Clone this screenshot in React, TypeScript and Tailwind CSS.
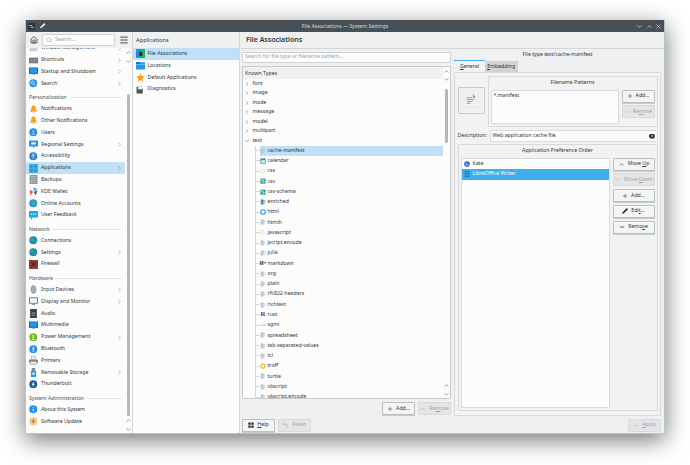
import { ChevronDown, ChevronRight, ChevronUp, Check, Minus, Plus, Search, X, Undo2, Menu, Home, Pencil } from "lucide-react";
import type { ReactNode } from "react";

type SideItem = { name: string; icon: string; more?: boolean; active?: boolean };

const sections: { title?: string; items: SideItem[] }[] = [
  {
    items: [
      { name: "Window Management", icon: "doc", more: true },
      { name: "Shortcuts", icon: "keyboard", more: true },
      { name: "Startup and Shutdown", icon: "monitor", more: true },
      { name: "Search", icon: "search", more: true },
    ],
  },
  {
    title: "Personalization",
    items: [
      { name: "Notifications", icon: "bell" },
      { name: "Other Notifications", icon: "bell" },
      { name: "Users", icon: "user" },
      { name: "Regional Settings", icon: "chat", more: true },
      { name: "Accessibility", icon: "access" },
      { name: "Applications", icon: "apps", more: true, active: true },
      { name: "Backups", icon: "backup" },
      { name: "KDE Wallet", icon: "wallet" },
      { name: "Online Accounts", icon: "online" },
      { name: "User Feedback", icon: "feedback" },
    ],
  },
  {
    title: "Network",
    items: [
      { name: "Connections", icon: "globe" },
      { name: "Settings", icon: "globe", more: true },
      { name: "Firewall", icon: "firewall" },
    ],
  },
  {
    title: "Hardware",
    items: [
      { name: "Input Devices", icon: "mouse", more: true },
      { name: "Display and Monitor", icon: "screen", more: true },
      { name: "Audio", icon: "audio" },
      { name: "Multimedia", icon: "monitor" },
      { name: "Power Management", icon: "power", more: true },
      { name: "Bluetooth", icon: "bluetooth" },
      { name: "Printers", icon: "printer" },
      { name: "Removable Storage", icon: "usb", more: true },
      { name: "Thunderbolt", icon: "thunder" },
    ],
  },
  {
    title: "System Administration",
    items: [
      { name: "About this System", icon: "info" },
      { name: "Software Update", icon: "update" },
    ],
  },
];

const treeTop = ["font", "image", "inode", "message", "model", "multipart"];

const treeLeaves: [string, string][] = [
  ["cache-manifest", "file"],
  ["calendar", "calendar"],
  ["css", "braces"],
  ["csv", "sheet"],
  ["csv-schema", "sheet"],
  ["enriched", "rich"],
  ["html", "html"],
  ["htmlh", "file"],
  ["javascript", "braces"],
  ["jscript.encode", "file"],
  ["julia", "file"],
  ["markdown", "markdown"],
  ["org", "file"],
  ["plain", "file"],
  ["rfc822-headers", "file"],
  ["richtext", "file"],
  ["rust", "rust"],
  ["sgml", "sgml"],
  ["spreadsheet", "file"],
  ["tab-separated-values", "file"],
  ["tcl", "file"],
  ["troff", "troff"],
  ["turtle", "file"],
  ["vbscript", "file"],
  ["vbscript.encode", "file"],
];

const SideIcon = function ({ kind }: { kind: string }) {
  const round = (fill: string, inner: ReactNode) => (
    <svg viewBox="0 0 16 16" className="size-[8.5px]">
      <circle cx="8" cy="8" r="7.5" fill={fill} />
      {inner}
    </svg>
  );
  const box = (inner: ReactNode) => (
    <svg viewBox="0 0 16 16" className="size-[9px]">
      {inner}
    </svg>
  );
  switch (kind) {
    case "keyboard":
      return box(
        <>
          <rect x="0" y="3" width="16" height="10" fill="#6b7277" />
          <path d="M2 6h12M2 8.5h12M4 11h8" stroke="#d5d8da" strokeWidth="1" strokeDasharray="1.4 .8" />
        </>
      );
    case "monitor":
      return box(
        <>
          <rect x="0" y="1" width="16" height="11" fill="#2b3a44" />
          <rect x="1" y="2" width="14" height="8.5" fill="#1d99f3" />
          <rect x="5" y="12" width="6" height="1.5" fill="#7f8c8d" />
        </>
      );
    case "search":
      return round("#2196e8", <path d="M6.8 4a2.8 2.8 0 1 0 .01 0M9 9l3 3" fill="none" stroke="#fff" strokeWidth="1.3" />);
    case "bell":
      return box(<path d="M8 1c3 0 4 2.500 4 6l2 5H2l2-5c0-3.500 1-6 4-6zM6.500 13h3L8 15z" fill="#f6a21d" />);
    case "user":
      return round("#2a8fe0", <path d="M8 4a2 2 0 1 1-.01 0M4.500 12c.5-3 6.500-3 7 0" fill="#9fd2f5" />);
    case "chat":
      return box(
        <>
          <rect x="0" y="1" width="16" height="10.500" rx="1" fill="#2196e8" />
          <path d="M7 11.500h3L8 15z" fill="#2196e8" />
          <rect x="4" y="4" width="8" height="4" fill="#d8ecfb" />
        </>
      );
    case "access":
      return round("#2a80cf", <path d="M8 3.500a1.200 1.200 0 1 1-.01 0M4.500 7h7M8 7v3M6 12.500 8 10l2 2.500" fill="none" stroke="#fff" strokeWidth="1.100" />);
    case "apps":
      return (
        <svg viewBox="0 0 16 16" className="size-[9px]">
          <rect width="16" height="16" fill="#3daee9" />
          <path d="M3 3h3v3H3zM10 3h3v3h-3zM3 10h3v3H3zM10 10h3v3h-3z" fill="#1d7fc2" />
        </svg>
      );
    case "backup":
      return box(
        <>
          <rect x="1" y="0" width="14" height="16" rx="1" fill="#8b9194" />
          <path d="M3 3h10M3 6.500h10M3 10h10M3 13h10" stroke="#e3e5e6" strokeWidth="1.500" strokeDasharray="2 1" />
        </>
      );
    case "wallet":
      return box(
        <>
          <path d="M8 0 15 4 8 8z" fill="#3daee9" />
          <path d="M1 5 8 8 3 15z" fill="#e8572a" />
          <path d="M8 8l7-2-3 9z" fill="#4a5a68" />
          <circle cx="8" cy="8" r="2" fill="#eee" />
        </>
      );
    case "online":
      return round("#2a90d9", <path d="M5 3c3 1 7 2 8 6-2 3-4 4-6 3-2-2-3-5-2-9z" fill="#3fae8c" />);
    case "feedback":
      return box(
        <>
          <rect x="0" y="0" width="16" height="11.500" rx="1" fill="#1fa8e8" />
          <path d="M3 11.500h4L3.500 15.500z" fill="#3a9a5d" />
          <path d="M3.500 5.500h2M7 5.500h2M10.500 5.500h2" stroke="#fff" strokeWidth="2" />
        </>
      );
    case "globe":
      return round("#2480d1", <path d="M3 3.500c3-1 6 1 6.500 3.500-1 1-1.500 3.500-3.500 3C4 9.500 2 6 3 3.500zM10 11c1-1 2.500-1.500 4-1.500-.5 2-2 4-4 4.500z" fill="#3dae5e" />);
    case "firewall":
      return box(
        <>
          <rect width="16" height="16" fill="#a33a2a" />
          <path d="M0 5h16M0 10.500h16M5 0v5M11 5v5.500M5 10.500V16" stroke="#3f2a25" strokeWidth="1" />
          <path d="M6 6h4v4H6z" fill="#2a2a2a" />
        </>
      );
    case "mouse":
      return box(<path d="M8 1c3 0 4.500 3 4.500 7s-1.500 7-4.500 7-4.500-3-4.500-7S5 1 8 1z" fill="#a8adb0" stroke="#6b7277" strokeWidth=".8" />);
    case "screen":
      return box(
        <>
          <rect x="0" y="1" width="16" height="10.500" fill="#263238" />
          <rect x="1" y="2" width="14" height="8.500" fill="#eef2f4" />
          <rect x="5" y="12" width="6" height="2" fill="#7f8c8d" />
        </>
      );
    case "audio":
      return box(
        <>
          <rect x="2" y="0" width="12" height="16" fill="#3a4248" />
          <circle cx="8" cy="9" r="3.500" fill="#7d8488" />
          <circle cx="8" cy="9" r="1.500" fill="#2a2f33" />
        </>
      );
    case "power":
      return round("#6fbf1b", <path d="M8 3.500v5.500M6 12h4" stroke="#fff" strokeWidth="2" />);
    case "bluetooth":
      return round("#1d8ff0", <path d="M5.500 5.500 10.500 10.500 8 13V3l2.500 2.500L5.500 10.500" fill="none" stroke="#fff" strokeWidth="1" />);
    case "printer":
      return box(
        <>
          <rect x="4" y="1" width="8" height="5" fill="#eef0f1" stroke="#8a9094" strokeWidth=".8" />
          <rect x="0" y="6" width="16" height="6" rx="1" fill="#7f868a" />
          <rect x="3" y="10" width="10" height="5" fill="#f6f7f7" stroke="#8a9094" strokeWidth=".8" />
          <path d="M4 13.500h8" stroke="#f6a21d" strokeWidth="1" />
        </>
      );
    case "usb":
      return box(
        <>
          <rect x="5" y="0" width="6" height="5" fill="#7f868a" />
          <rect x="3.500" y="5" width="9" height="11" rx="1" fill="#1d99f3" />
          <rect x="6" y="8" width="4" height="4" fill="#dff0fc" />
        </>
      );
    case "thunder":
      return round("#11619f", <path d="M9.500 2.500 5 9h2.500l-1 4.500L11 7H8.500z" fill="#fff" />);
    case "info":
      return round("#1d8ff0", <path d="M7 4h2v1.800H7zM7 7h2v5H7z" fill="#fff" />);
    case "update":
      return round("#f0c98a", <path d="M6.500 4h3v4.500H11L8 12 5 8.500h1.500z" fill="#c77d1c" />);
    default:
      return box(<rect x="1" y="4" width="14" height="9" rx="1" fill="#c9cdd0" />);
  }
};

const TreeIcon = function ({ kind }: { kind: string }) {
  switch (kind) {
    case "calendar":
      return (
        <svg viewBox="0 0 16 16" className="size-[6px]">
          <rect x="1" y="1" width="14" height="14" fill="#26a08a" />
          <rect x="3" y="6" width="10" height="7" fill="#d7f0ea" />
        </svg>
      );
    case "braces":
      return <span className="text-[5px] leading-none tracking-[1px] text-[#f5c16c]">{"{}"}</span>;
    case "sheet":
      return (
        <svg viewBox="0 0 16 16" className="size-[6px]">
          <rect x="1" y="1" width="14" height="14" rx="1" fill="#2fa58e" />
          <path d="M8 1v14M1 6h7M8 10h7" stroke="#d7f0ea" strokeWidth="1.800" />
        </svg>
      );
    case "rich":
      return (
        <svg viewBox="0 0 16 16" className="size-[6px]">
          <rect x="2" y="1" width="7" height="14" fill="#6f8fb5" />
          <path d="M4 4h9M4 7.500h11M4 11h9" stroke="#51708f" strokeWidth="1.500" />
        </svg>
      );
    case "html":
      return (
        <svg viewBox="0 0 16 16" className="size-[6px]">
          <circle cx="8" cy="8" r="6" fill="none" stroke="#1d99f3" strokeWidth="3" />
        </svg>
      );
    case "markdown":
      return <span className="text-[4.500px] leading-none font-bold text-[#31363b]">M+</span>;
    case "rust":
      return <span className="font-['Liberation_Serif',serif] text-[7px] leading-none font-bold text-[#7b1fa2]">R</span>;
    case "sgml":
      return <span className="text-[5px] leading-none font-bold text-[#d4a5e8]">{"<>"}</span>;
    case "troff":
      return (
        <svg viewBox="0 0 16 16" className="size-[6px]">
          <circle cx="8" cy="8" r="5.500" fill="#fff" stroke="#f6b21d" strokeWidth="3" />
        </svg>
      );
    default:
      return (
        <svg viewBox="0 0 16 16" className="size-[6px]">
          <rect x="2" y="1" width="7" height="14" fill="#c5c9cc" />
          <path d="M4 4h9M4 7.500h11M4 11h9" stroke="#b4b9bd" strokeWidth="1.500" />
        </svg>
      );
  }
};

const Btn = function ({
  children,
  disabled,
  className = "",
}: {
  children: ReactNode;
  disabled?: boolean;
  className?: string;
}) {
  return (
    <div
      className={
        "flex h-[13px] items-center justify-center gap-[3px] rounded-[1px] border text-[5.2px] whitespace-nowrap " +
        (disabled
          ? "border-[#d8dadb] bg-[#e3e5e6] text-[#a3a5a7] "
          : "border-[#bcbebf] bg-[#f3f4f4] text-[#31363b] shadow-[0_1px_0_#c8cacb] ") +
        className
      }
    >
      {children}
    </div>
  );
};

const Sidebar = function () {
  return (
    <aside className="flex w-[107px] shrink-0 flex-col border-r border-[#d4d5d6] bg-[#fcfcfc]">
      <div className="z-10 flex h-[16px] shrink-0 items-center bg-[#eff0f1] pr-[3px] pl-[4px]">
        <Home className="size-[8px] text-[#232629]" strokeWidth={2.2} />
        <div className="ml-[4px] flex h-[11.500px] w-[74px] items-center gap-[3px] rounded-[1px] border border-[#cfd1d2] bg-[#fcfcfc] pl-[3px] text-[5.2px] text-[#9a9da0]">
          <Search className="size-[6px]" />
          Search...
        </div>
        <Menu className="ml-[4px] size-[10px] text-[#232629]" strokeWidth={2} />
      </div>
      <div className="flex min-h-0 flex-1">
        <div className="w-[98.500px] overflow-hidden">
          <div className="-mt-[5.700px]">
            {sections.map((s, i) => (
              <div key={i}>
                {s.title && (
                  <div className="flex h-[13.700px] items-center gap-[3px] pt-[3px] pr-[3px] pl-[3px] text-[5.2px] text-[#4d5154]">
                    <span className="whitespace-nowrap">{s.title}</span>
                    <div className="h-px flex-1 bg-[#e4e5e6]" />
                  </div>
                )}
                {s.items.map((it) => (
                  <div
                    key={it.name}
                    className={
                      "flex h-[11.800px] items-center pl-[3px] text-[5.2px] whitespace-nowrap text-[#31363b] " +
                      (it.active ? "bg-[#c2e0f5]" : "")
                    }
                  >
                    <div className="flex w-[12px] shrink-0">
                      <SideIcon kind={it.icon} />
                    </div>
                    <span>{it.name}</span>
                    {it.more && <ChevronRight className="mr-[2px] ml-auto size-[7px] text-[#5c6064]" strokeWidth={1.5} />}
                  </div>
                ))}
              </div>
            ))}
          </div>
        </div>
        <div className="flex flex-1 flex-col items-center text-[#5c6064]">
          <ChevronUp className="mt-[1px] size-[7px]" />
          <ChevronDown className="mt-[2px] size-[7px]" />
          <div className="mt-[29px] h-[324px] w-[3px] rounded-full bg-[#b5b7b9]" />
          <ChevronUp className="mt-[1px] size-[7px]" />
          <ChevronDown className="mt-[2px] size-[7px]" />
        </div>
      </div>
    </aside>
  );
};

const Middle = function () {
  const rows = ["File Associations", "Locations", "Default Applications", "Diagnostics"];
  return (
    <section className="flex w-[107px] shrink-0 flex-col border-r border-[#d4d5d6] bg-[#fcfcfc]">
      <div className="flex h-[16px] shrink-0 items-center bg-[#eff0f1] pt-[1px] pl-[3px] text-[5.7px] text-[#31363b]">Applications</div>
      <div>
        {rows.map((r, i) => (
          <div
            key={r}
            className={"flex h-[11.800px] items-center pl-[3px] text-[5.2px] text-[#31363b] " + (i === 0 ? "bg-[#c2e0f5]" : "")}
          >
            <div className="flex w-[11.500px] shrink-0">
              {i === 0 && (
                <svg viewBox="0 0 16 16" className="size-[9px]">
                  <rect width="16" height="16" rx="1" fill="#1d8fd8" />
                  <rect x="8" y="0" width="8" height="16" fill="#27ae60" />
                  <rect x="6" y="5" width="5" height="7" fill="#223" />
                </svg>
              )}
              {i === 1 && (
                <svg viewBox="0 0 16 16" className="size-[9px]">
                  <rect y="2" width="16" height="13" rx="1" fill="#1d99f3" />
                  <rect y="2" width="7" height="3" fill="#0f6fb5" />
                  <rect y="6" width="16" height="1" fill="#9fd6fa" />
                </svg>
              )}
              {i === 2 && (
                <svg viewBox="0 0 16 16" className="size-[9px]">
                  <path d="M8 .500l2.300 5 5.200.6-3.900 3.500 1.100 5.400L8 12.300 3.300 15l1.100-5.400L.5 6.100l5.200-.6z" fill="#f6a21d" />
                </svg>
              )}
              {i === 3 && (
                <svg viewBox="0 0 16 16" className="size-[9px]">
                  <path d="M1 15V3h3v6l4-3v3l4-3v9z" fill="#4d5154" />
                  <path d="M5 2h2v2H5zM9 1h2v2H9z" fill="#9aa0a4" />
                </svg>
              )}
            </div>
            {r}
          </div>
        ))}
      </div>
    </section>
  );
};

const Tree = function () {
  return (
    <div className="flex w-[209px] flex-col">
      <div className="mt-[3px] flex h-[11.500px] items-center rounded-[1px] border border-[#cfd1d2] bg-[#fcfcfc] pl-[2px] text-[5.2px] text-[#a0a2a4]">
        Search for file type or filename pattern...
      </div>
      <div className="mt-[3px] flex h-[333px] overflow-hidden rounded-[1px] border border-[#c8cacb] bg-[#fcfcfc]">
        <div className="w-[199.500px] overflow-hidden">
          <div className="flex h-[12px] items-center bg-[#eff0f1] pt-[1px] pl-[2px] text-[5.2px] text-[#31363b]">Known Types</div>
          <div className="text-[5.2px] text-[#31363b]">
            {treeTop.map((t) => (
              <div key={t} className="flex h-[9.500px] items-center">
                <ChevronRight className="ml-[1px] size-[6px] text-[#5c6064]" />
                <span className="ml-[2.500px]">{t}</span>
              </div>
            ))}
            <div className="flex h-[9.500px] items-center">
              <ChevronDown className="ml-[1px] size-[6px] text-[#5c6064]" />
              <span className="ml-[2.500px]">text</span>
            </div>
            <div className="ml-[11.500px] border-l border-[#d5d7d8]">
              {treeLeaves.map(([name, icon], i) => (
                <div key={name} className="flex h-[10.270px] items-center">
                  <div className="h-px w-[4px] shrink-0 bg-[#d5d7d8]" />
                  <div className={"flex h-full flex-1 items-center whitespace-nowrap " + (i === 0 ? "bg-[#c2e0f5]" : "")}>
                    <div className="flex w-[7px] shrink-0 justify-center">
                      <TreeIcon kind={icon} />
                    </div>
                    <span className="ml-[1px]">{name}</span>
                  </div>
                </div>
              ))}
            </div>
          </div>
        </div>
        <div className="flex flex-1 flex-col items-center text-[#5c6064]">
          <ChevronUp className="mt-[0.500px] size-[7px]" />
          <ChevronDown className="mt-[2px] size-[7px]" />
          <div className="mt-[6px] h-[55px] w-[3.500px] rounded-full bg-[#b5b7b9]" />
          <ChevronUp className="mt-[239px] size-[7px]" />
          <ChevronDown className="mt-[2px] size-[7px]" />
        </div>
      </div>
      <div className="mt-[3px] flex justify-end gap-[3px]">
        <Btn className="w-[33px]">
          <Plus className="size-[6px]" />
          Add...
        </Btn>
        <Btn disabled className="w-[33px]">
          <Minus className="size-[6px]" />
          <span>
            Re<u>m</u>ove
          </span>
        </Btn>
      </div>
    </div>
  );
};

const Group = function ({ title, className, children }: { title: string; className: string; children: ReactNode }) {
  return (
    <div className={"rounded-[1px] border border-[#d8dadb] bg-[#f2f2f2] " + className}>
      <div className="flex h-[12.500px] items-center justify-center text-[5.2px] text-[#31363b]">{title}</div>
      {children}
    </div>
  );
};

const FileType = function () {
  return (
    <div className="ml-[3px] flex w-[207px] flex-col">
      <div className="flex h-[11.500px] items-center justify-center pt-[1px] text-[5.2px] text-[#31363b]">File type text/cache-manifest</div>
      <div className="flex text-[5.2px] text-[#31363b]">
        <div className="flex h-[12px] w-[31px] items-center justify-center border-t border-[#3daee9] bg-[#f2f2f2]">
          <span>
            <u>G</u>eneral
          </span>
        </div>
        <div className="mt-[1px] flex h-[11px] w-[32.500px] items-center justify-center bg-[#d0d2d3]">
          <span>
            <u>E</u>mbedding
          </span>
        </div>
      </div>
      <div className="h-[344px] rounded-[1px] border border-[#d8dadb] bg-[#f2f2f2] px-[2.500px] pt-[3px] text-[5.2px] text-[#31363b]">
        <div className="flex">
          <div className="mt-[11px] flex size-[27px] shrink-0 items-center justify-center rounded-[1px] border border-[#c8cacb] bg-[#eff0f1]">
            <svg viewBox="0 0 16 16" className="size-[15px]">
              <path d="M10 1l2 4h-2z" fill="#5c6064" />
              <path d="M3 5h6M3 7h8M3 9h6M3 11h4" stroke="#9a9ea1" strokeWidth="1" />
              <path d="M1 15h14" stroke="#d5d7d8" strokeWidth=".6" />
            </svg>
          </div>
          <Group title="Filename Patterns" className="ml-[3px] h-[51px] flex-1">
            <div className="flex gap-[3px] px-[2px]">
              <div className="h-[34px] w-[128px] rounded-[1px] border border-[#d8dadb] bg-[#fcfcfc] pt-[1px] pl-[2px]">*.manifest</div>
              <div className="flex w-[33px] flex-col gap-[2.500px]">
                <Btn>
                  <Plus className="size-[6px]" />
                  Add...
                </Btn>
                <Btn disabled>
                  <Minus className="size-[6px]" />
                  <span>
                    Re<u>m</u>ove
                  </span>
                </Btn>
              </div>
            </div>
          </Group>
        </div>
        <div className="mt-[3px] flex h-[12px] items-center">
          <span className="w-[32px]">Description:</span>
          <div className="flex h-full flex-1 items-center justify-between rounded-[1px] border border-[#d8dadb] bg-[#fcfcfc] pr-[2px] pl-[2px]">
            Web application cache file
            <div className="flex h-[5px] w-[6px] items-center justify-center bg-[#232629] [clip-path:polygon(30%_0,100%_0,100%_100%,30%_100%,0_50%)]">
              <X className="size-[4px] text-white" strokeWidth={3} />
            </div>
          </div>
        </div>
        <Group title="Application Preference Order" className="mt-[2px] h-[267px]">
          <div className="flex gap-[3px] pl-[2px]">
            <div className="h-[250px] w-[149px] rounded-[1px] border border-[#d8dadb] bg-[#fcfcfc]">
              <div className="flex h-[10px] items-center gap-[3px] pl-[2px]">
                <svg viewBox="0 0 16 16" className="size-[6px]">
                  <circle cx="8" cy="8" r="7.500" fill="#1d6fc2" />
                  <path d="M6 4v8l4-4 2 4" stroke="#fff" strokeWidth="1.500" fill="none" />
                </svg>
                Kate
              </div>
              <div className="mt-[0.500px] flex h-[10.500px] items-center gap-[3px] bg-[#3daee9] pl-[2px] text-[#fcfcfc]">
                <svg viewBox="0 0 16 16" className="size-[6px]">
                  <rect x="2" y="0" width="12" height="16" fill="#1d7fc2" />
                  <path d="M4 4h8M4 8h8M4 12h6" stroke="#9fd6fa" strokeWidth="1" />
                </svg>
                LibreOffice Writer
              </div>
            </div>
            <div className="flex w-[42px] flex-col gap-[2.800px]">
              <Btn>
                <ChevronUp className="size-[7px]" />
                <span>
                  Move <u>U</u>p
                </span>
              </Btn>
              <Btn disabled>
                <ChevronDown className="size-[7px]" />
                <span>
                  Move <u>D</u>own
                </span>
              </Btn>
              <Btn>
                <Plus className="size-[6px]" />
                Add...
              </Btn>
              <Btn>
                <Pencil className="size-[6px]" fill="currentColor" />
                <span>
                  Edi<u>t</u>...
                </span>
              </Btn>
              <Btn>
                <Minus className="size-[6px]" strokeWidth={3} />
                <span>
                  Remo<u>v</u>e
                </span>
              </Btn>
            </div>
          </div>
        </Group>
      </div>
    </div>
  );
};

export default function App() {
  return (
    <div className="h-[465px] w-[690px] overflow-hidden bg-white pt-[20px] pl-[25px] font-['Noto_Sans',sans-serif]">
      <div className="flex h-[414px] w-[640px] flex-col border-x border-b border-[#b8c4cc] bg-[#eff0f1] shadow-[0_6px_22px_rgba(0,0,0,0.55)]">
        <div className="flex h-[12px] shrink-0 items-center bg-[#475057] px-[2px] text-[5.2px] text-[#d5d8da]">
          <div className="flex w-[30px] items-center">
            <svg viewBox="0 0 16 16" className="size-[7px]">
              <rect width="16" height="16" fill="#2b3338" />
              <path d="M2 6h8M6 10h8" stroke="#9fd6fa" strokeWidth="2" />
            </svg>
            <Pencil className="ml-[5px] size-[5.500px] text-white" fill="white" />
          </div>
          <span className="flex-1 pt-[1px] text-center">File Associations — System Settings</span>
          <div className="flex w-[30px] items-center justify-end gap-[2.500px]">
            <ChevronDown className="size-[7px] text-white" />
            <ChevronUp className="size-[7px] text-white" />
            <X className="size-[7px] text-white" />
          </div>
        </div>
        <div className="flex min-h-0 flex-1">
          <Sidebar />
          <Middle />
          <div className="flex min-w-0 flex-1 flex-col pl-[1px]">
            <div className="flex h-[16.500px] shrink-0 items-center border-b border-[#d4d5d6] pt-[1px] pl-[5px] text-[7px] font-semibold text-[#31363b]">
              File Associations
            </div>
            <div className="flex pl-[1px]">
              <Tree />
              <FileType />
            </div>
            <div className="mt-[2.500px] flex items-start justify-between pr-[3px] pl-[1px]">
              <div className="flex gap-[3px]">
                <Btn className="w-[33px]">
                  <svg viewBox="0 0 16 16" className="size-[6px]">
                    <path d="M1 1h6v6H1zM9 1h6v6H9zM1 9h6v6H1zM9 9h6v6H9z" fill="#232629" />
                  </svg>
                  <span>
                    <u>H</u>elp
                  </span>
                </Btn>
                <Btn disabled className="w-[33px]">
                  <Undo2 className="size-[6px]" />
                  Reset
                </Btn>
              </div>
              <Btn disabled className="w-[33px]">
                <Check className="size-[6px]" />
                <span>
                  <u>A</u>pply
                </span>
              </Btn>
            </div>
          </div>
        </div>
      </div>
    </div>
  );
}
